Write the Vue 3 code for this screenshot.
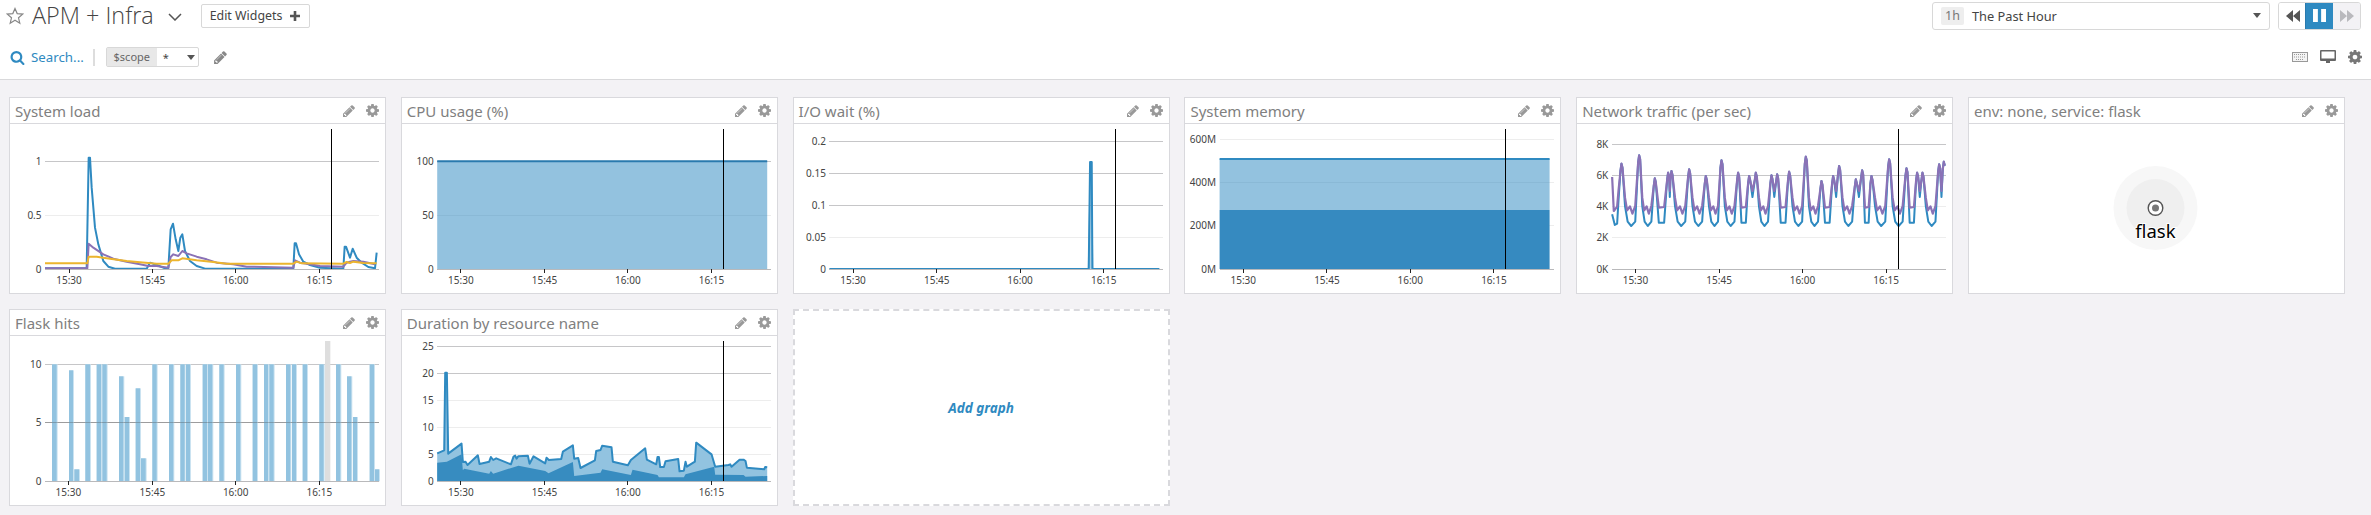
<template>
  <div class="page">
    <header class="top">
      <div class="row-title">
        <svg class="star" viewBox="0 0 18 18" width="18" height="18"><polygon points="9,1.5 11.2,6.6 16.7,7.1 12.5,10.8 13.8,16.2 9,13.3 4.2,16.2 5.5,10.8 1.3,7.1 6.8,6.6" /></svg>
        <h1 class="dash-title">APM + Infra</h1>
        <svg class="chevron" viewBox="0 0 14 8" width="14" height="8"><polyline points="1,1 7,7 13,1" /></svg>
        <button class="edit-btn">
          Edit Widgets
          <svg viewBox="0 0 10 10" width="10" height="10"><path d="M3.7 0h2.6v3.7H10v2.6H6.3V10H3.7V6.3H0V3.7h3.7z" /></svg>
        </button>
        <div class="time-box">
          <span class="time-tag">1h</span>
          <span class="time-label">The Past Hour</span>
          <span class="caret"></span>
        </div>
        <div class="playback">
          <span class="pb pb-back"><svg viewBox="0 0 14 12" width="14" height="12"><path d="M7 0v12L0 6zM14 0v12L7 6z" /></svg></span>
          <span class="pb pb-pause"><svg viewBox="0 0 12 12" width="13" height="13"><path d="M0 0h4.5v12H0zM7.5 0H12v12H7.5z" /></svg></span>
          <span class="pb pb-next"><svg viewBox="0 0 14 12" width="14" height="12"><path d="M0 0v12l7-6zM7 0v12l7-6z" /></svg></span>
        </div>
      </div>
      <div class="row-tools">
        <svg class="search-icon" viewBox="0 0 1792 1792" width="15" height="15"><path :d="SEARCH" /></svg>
        <span class="search-text">Search...</span>
        <span class="divider"></span>
        <div class="scope">
          <span class="scope-name">$scope</span>
          <span class="scope-value">*<span class="caret small"></span></span>
        </div>
        <svg class="tool-pencil" viewBox="0 0 1792 1792" width="15" height="15"><path :d="PENCIL" /></svg>
        <div class="tools-right">
          <svg viewBox="0 0 16 10" width="16" height="10" class="kbd">
            <rect x="0.5" y="0.5" width="15" height="9" />
            <path d="M2 2.5h12M2 5h12M4 7.5h8" stroke-dasharray="1 1" />
          </svg>
          <svg viewBox="0 0 16 14" width="16" height="14" class="monitor"><path d="M1 0h14a1 1 0 0 1 1 1v9a1 1 0 0 1-1 1H1a1 1 0 0 1-1-1V1a1 1 0 0 1 1-1zm.5 1.5v7h13v-7zM6 11h4v2H6z" fill-rule="evenodd" /></svg>
          <svg viewBox="128 128 1536 1536" width="14" height="14" class="gear"><path :d="GEAR" /></svg>
        </div>
      </div>
    </header>

    <main class="board">
      <section v-for="c in cards" :key="c.title" class="card">
        <div class="card-head">
          <span class="card-title">{{ c.title }}</span>
          <svg class="act" viewBox="0 0 1792 1792" width="14" height="14"><path :d="PENCIL" /></svg>
          <svg class="act" viewBox="128 128 1536 1536" width="13" height="13"><path :d="GEAR" /></svg>
        </div>

        <svg v-if="c.flask" class="plot" width="375" height="169">
          <circle cx="186.5" cy="84" r="42" fill="#f7f7f7" />
          <circle cx="186.5" cy="84" r="29" fill="#efefef" />
          <circle cx="186.5" cy="84" r="7.3" fill="#fff" stroke="#555" stroke-width="1.4" />
          <circle cx="186.5" cy="84" r="3.5" fill="#777" />
          <text class="node-label" x="186.5" y="114" text-anchor="middle">flask</text>
        </svg>

        <svg v-else class="plot" width="375" height="169">
          <line
            v-for="g in c.grids" :key="g.z"
            :x1="px(c, c.x0)" :x2="px(c, c.x1)" :y1="py(c, g.z)" :y2="py(c, g.z)"
            :stroke="g.dark ? '#c6c6c8' : '#ededed'" shape-rendering="crispEdges"
          />
          <polygon v-for="(a, i) in c.areas" :key="'a' + i" :points="pts(c, a.d)" :fill="a.fill" />
          <rect
            v-for="(b, i) in c.bars" :key="'p' + i"
            :x="px(c, b[0])" :y="py(c, b[2])" :width="(b[1] - b[0]) / 3 + 1" :height="py(c, c.axis) - py(c, b[2])"
            :fill="b[3] || '#cbe3f1'"
          />
          <rect
            v-for="(b, i) in c.bars" :key="'b' + i"
            :x="px(c, b[0])" :y="py(c, b[2])" :width="(b[1] - b[0]) / 3" :height="py(c, c.axis) - py(c, b[2])"
            :fill="b[3] || '#92c3e0'"
          />
          <line
            v-if="c.bars"
            :x1="px(c, c.x0)" :x2="px(c, c.x1)" :y1="py(c, c.grids[1].z)" :y2="py(c, c.grids[1].z)"
            stroke="rgba(60,60,60,.3)" shape-rendering="crispEdges"
          />
          <polyline
            v-for="(l, i) in c.lines" :key="'l' + i"
            :points="pts(c, l.d)" fill="none" :stroke="l.color" :stroke-width="l.w || 2" stroke-linejoin="round"
          />
          <line :x1="px(c, c.x0)" :x2="px(c, c.x1)" :y1="py(c, c.axis)" :y2="py(c, c.axis)" stroke="#b9b9bb" shape-rendering="crispEdges" />
          <g v-for="(t, i) in c.ticks" :key="'t' + i">
            <line :x1="px(c, t)" :x2="px(c, t)" :y1="py(c, c.axis)" :y2="py(c, c.axis) + 4" stroke="#222" shape-rendering="crispEdges" />
            <text class="tick" :x="px(c, t)" :y="py(c, c.axis) + 15" text-anchor="middle">{{ times[i] }}</text>
          </g>
          <text
            v-for="y in c.labels" :key="y[0]"
            class="tick" :x="px(c, c.x0) - 3.5" :y="py(c, y[1]) + 3.5" text-anchor="end"
          >{{ y[0] }}</text>
          <line
            v-if="c.cursor"
            :x1="px(c, c.cursor)" :x2="px(c, c.cursor)" y1="5" :y2="py(c, c.axis)"
            stroke="#000" shape-rendering="crispEdges"
          />
        </svg>
      </section>

      <section class="add-card">
        <span>Add graph</span>
      </section>
    </main>
  </div>
</template>

<script setup>
const GEAR = 'M1152 896q0-106-75-181t-181-75-181 75-75 181 75 181 181 75 181-75 75-181zm512-109v222q0 12-8 23t-20 13l-185 28q-19 54-39 91 35 50 107 138 10 12 10 25t-9 23q-27 37-99 108t-94 71q-12 0-26-9l-138-108q-44 23-91 38-16 136-29 186-7 28-36 28h-222q-14 0-24.5-8.5t-11.5-21.5l-28-184q-49-16-90-37l-141 107q-10 9-25 9-14 0-25-11-126-114-165-168-7-10-7-23 0-12 8-23 15-21 51-66.5t54-70.5q-27-50-41-99l-183-27q-13-2-21-12.5t-8-23.5v-222q0-12 8-23t19-13l186-28q14-46 39-92-40-57-107-138-10-12-10-24 0-10 9-23 26-36 98.5-107.5t94.5-71.5q13 0 26 10l138 107q44-23 91-38 16-136 29-186 7-28 36-28h222q14 0 24.5 8.5t11.5 21.5l28 184q49 16 90 37l142-107q9-9 24-9 13 0 25 10 129 119 165 170 7 8 7 22 0 12-8 23-15 21-51 66.5t-54 70.5q26 50 41 98l183 28q13 2 21 12.5t8 23.5z'
const PENCIL = 'M491 1536l91-91-235-235-91 91v107h128v128h107zm523-928q0-22-22-22-10 0-17 7l-542 542q-7 7-7 17 0 22 22 22 10 0 17-7l542-542q7-7 7-17zm-54-192l416 416-832 832h-416v-416zm683 96q0 53-37 90l-166 166-416-416 166-165q36-38 90-38 53 0 91 38l235 234q37 39 37 91z'
const SEARCH = 'M1216 832q0-185-131.5-316.5t-316.5-131.5-316.5 131.5-131.5 316.5 131.5 316.5 316.5 131.5 316.5-131.5 131.5-316.5zm512 832q0 52-38 90t-90 38q-54 0-90-38l-343-342q-179 124-399 124-143 0-273.5-55.5t-225-150-150-225-55.5-273.5 55.5-273.5 150-225 225-150 273.5-55.5 273.5 55.5 225 150 150 225 55.5 273.5q0 220-124 399l343 343q37 37 37 90z'

const BLUE = '#2f8ac1'
const PURPLE = '#8a72b6'
const YELLOW = '#ecb52e'
const LIGHT = '#92c3e0'
const DARK = '#378cc0'

const times = ['15:30', '15:45', '16:00', '16:15']

// series are written in 3x crop coordinates, px/py bring them back to the plot
const px = (c, z) => (z - c.ox) / 3
const py = (c, z) => (z - c.oy) / 3
const pts = (c, d) => d.map(p => `${px(c, p[0]).toFixed(2)},${py(c, p[1]).toFixed(2)}`).join(' ')
const parse = s => s.trim().split(/\s+/).map(p => p.split(',').map(Number))

// network peaks: the two lines share their tops and only differ in the valleys
const peaks = parse(`185,218 238,193 285,262 325,245 335,240 388,235 438,255 485,208 535,245 568,255 588,245 635,253 652,250 688,242 738,197 785,270 820,255 838,225 888,265 907,238 935,255 988,205 1040,232 1072,245 1088,245 1138,220 1152,212`)

function trafficLine(start, shape) {
  const out = [...start]
  peaks.forEach(([x, y], i) => {
    out.push([x - 3, y + 22], [x, y], [x + 3, y + 12])
    const next = peaks[i + 1]
    if (!next) return
    const gap = next[0] - x
    if (gap < 25) out.push([x + gap / 2, shape.dip])
    else {
      const stops = gap < 45 ? shape.short : shape.valley
      stops.forEach(([t, v]) => out.push([x + gap * t, v]))
    }
  })
  return out
}

const blueTraffic = trafficLine([[157, 370], [165, 402], [172, 398], [176, 330]], {
  dip: 318,
  short: [[0.3, 395], [0.7, 395]],
  valley: [[0.2, 345], [0.35, 392], [0.55, 405], [0.78, 392]],
})
const purpleTraffic = trafficLine([[157, 258], [162, 360], [172, 347], [176, 300]], {
  dip: 300,
  short: [[0.3, 350], [0.7, 348]],
  valley: [[0.2, 320], [0.32, 358], [0.48, 346], [0.62, 368], [0.78, 345]],
})

const hitBars = [
  [156, 170, 190], [207, 219, 208], [223, 237, 505], [256, 270, 190], [290, 303, 190], [307, 320, 190],
  [357, 370, 226], [374, 387, 348], [407, 420, 262], [423, 437, 472], [457, 470, 190], [507, 520, 190],
  [541, 554, 190], [558, 570, 190], [608, 621, 190], [624, 637, 190], [658, 671, 190], [708, 721, 190],
  [758, 771, 190], [792, 804, 190], [808, 821, 190], [858, 871, 190], [876, 888, 190], [908, 921, 190],
  [958, 971, 190], [975, 988, 120, '#dedede'], [1008, 1021, 190], [1041, 1054, 226], [1059, 1071, 348],
  [1109, 1122, 190], [1125, 1137, 505],
]

const durationTop = parse(`141,457 162,448 165,215 170,215 174,458 214,428 218,483 226,482 232,492 263,463 268,489 297,482 302,468 309,477 318,472 362,490 370,467 375,464 379,473 384,466 413,464 418,488 430,466 465,487 469,470 476,477 513,474 518,452 548,433 552,473 564,471 571,501 614,478 618,450 631,447 636,434 664,439 668,482 713,493 722,477 765,442 770,476 798,490 802,468 806,468 810,498 821,498 826,481 864,474 868,511 881,509 886,482 890,497 914,482 918,425 964,460 975,497 1015,492 1020,490 1024,497 1048,476 1060,476 1066,480 1070,500 1122,505 1125,498 1131,499`)
const durationLow = parse(`141,485 170,482 214,460 218,508 222,503 297,518 302,510 309,518 385,494 465,510 475,517 548,483 552,525 631,515 636,505 722,522 727,506 802,522 806,529 881,529 886,520 972,497 975,521 1060,522 1066,527 1131,525`)

const closeArea = (line, base) => [[line[0][0], base], ...line, [line[line.length - 1][0], base]]

const cards = [
  {
    title: 'System load', ox: 30, oy: 99, x0: 135, x1: 1137, axis: 535, cursor: 994,
    ticks: [207, 457, 707, 958],
    grids: [{ z: 211, dark: true }, { z: 373 }],
    labels: [['1', 211], ['0.5', 373], ['0', 535]],
    lines: [
      { color: BLUE, d: parse(`135,532 260,532 266,200 270,200 275,290 285,410 295,460 310,510 325,527 345,533 440,533 450,515 470,522 495,532 505,532 512,415 519,398 527,445 535,480 541,440 547,430 555,480 570,510 590,525 615,533 880,533 884,457 888,457 897,490 910,512 930,522 960,530 1030,533 1034,467 1038,467 1050,500 1058,473 1070,500 1085,515 1105,528 1125,532 1130,485`) },
      { color: PURPLE, d: parse(`135,532 262,532 266,458 280,470 310,490 340,503 380,512 420,520 445,525 470,525 505,530 512,498 520,490 535,495 547,480 560,487 590,497 620,505 650,515 700,520 740,527 880,530 885,508 900,515 930,520 960,525 1030,527 1040,515 1050,512 1060,510 1090,512 1125,520`) },
      { color: YELLOW, d: parse(`135,517 262,517 266,497 290,497 330,503 380,510 420,514 470,518 505,518 515,508 535,508 547,502 590,508 640,513 680,518 880,518 890,512 905,517 1030,518 1040,513 1050,516 1060,512 1090,516 1130,517`) },
    ],
  },
  {
    title: 'CPU usage (%)', ox: 35.4, oy: 99, x0: 141, x1: 1143, axis: 535, cursor: 1000,
    ticks: [212, 463, 713, 964],
    grids: [{ z: 211, dark: true }, { z: 373 }],
    labels: [['100', 211], ['50', 373], ['0', 535]],
    areas: [{ fill: 'rgba(47,138,193,.52)', d: [[141, 211], [1131, 211], [1131, 534], [141, 534]] }],
    lines: [{ color: '#2a7aae', d: [[141, 211], [1131, 211]] }],
  },
  {
    title: 'I/O wait (%)', ox: 40.8, oy: 99, x0: 147, x1: 1149, axis: 535, cursor: 1006,
    ticks: [218, 469, 719, 970],
    grids: [{ z: 151, dark: true }, { z: 247, dark: true }, { z: 343, dark: true }, { z: 439 }],
    labels: [['0.2', 151], ['0.15', 247], ['0.1', 343], ['0.05', 439], ['0', 535]],
    areas: [{ fill: 'rgba(47,138,193,.4)', d: [[922, 534], [929, 213], [934, 213], [939, 534]] }],
    lines: [{ color: BLUE, d: [[147, 534], [925, 534], [929, 213], [934, 213], [936, 534], [1137, 534]] }],
  },
  {
    title: 'System memory', ox: 46.2, oy: 99, x0: 150, x1: 1152, axis: 535, cursor: 1009,
    ticks: [221, 472, 722, 973],
    grids: [{ z: 145 }, { z: 274 }, { z: 403 }],
    labels: [['600M', 145], ['400M', 274], ['200M', 403], ['0M', 535]],
    areas: [
      { fill: 'rgba(47,138,193,.52)', d: [[150, 204], [1140, 204], [1140, 357], [150, 357]] },
      { fill: 'rgba(47,134,190,.97)', d: [[150, 357], [1140, 357], [1140, 534], [150, 534]] },
    ],
    lines: [{ color: BLUE, w: 2, d: [[150, 204], [1140, 204]] }],
  },
  {
    title: 'Network traffic (per sec)', ox: 51.6, oy: 99, x0: 156, x1: 1158, axis: 535, cursor: 1015,
    ticks: [227, 478, 728, 979],
    grids: [{ z: 160, dark: true }, { z: 253, dark: true }, { z: 346 }, { z: 439 }],
    labels: [['8K', 160], ['6K', 253], ['4K', 346], ['2K', 439], ['0K', 535]],
    lines: [
      { color: BLUE, d: blueTraffic },
      { color: PURPLE, w: 2.2, d: purpleTraffic },
    ],
  },
  { title: 'env: none, service: flask', flask: true },
  {
    title: 'Flask hits', ox: 30, oy: 105, x0: 135, x1: 1137, axis: 541,
    ticks: [205, 457, 707, 958],
    grids: [{ z: 190, dark: true }, { z: 365, dark: true }],
    labels: [['10', 190], ['5', 365], ['0', 541]],
    bars: hitBars,
  },
  {
    title: 'Duration by resource name', ox: 35.4, oy: 105, x0: 141, x1: 1143, axis: 541, cursor: 1000,
    ticks: [212, 463, 713, 964],
    grids: [{ z: 136, dark: true }, { z: 217, dark: true }, { z: 298 }, { z: 379 }, { z: 460 }],
    labels: [['25', 136], ['20', 217], ['15', 298], ['10', 379], ['5', 460], ['0', 541]],
    areas: [
      { fill: LIGHT, d: closeArea(durationTop, 540) },
      { fill: DARK, d: closeArea(durationLow, 540) },
    ],
    lines: [{ color: BLUE, d: durationTop }],
  },
]
</script>

<style>
html, body { margin: 0; background: #f3f2f5; }
</style>

<style scoped>
.page {
  font-family: "Noto Sans", "Open Sans", sans-serif;
  min-height: 515px;
  background: #f3f2f5;
}

.top {
  background: #fff;
  border-bottom: 1px solid #d9d9db;
  height: 79px;
}

.row-title {
  display: flex;
  align-items: center;
  height: 31px;
  padding: 0 10px 0 6px;
}

.star { fill: none; stroke: #888; stroke-width: 1.2; margin-right: 8px; }

.dash-title {
  margin: 0;
  font-family: "Open Sans", "Noto Sans", sans-serif;
  font-size: 23.4px;
  font-weight: 300;
  color: #444;
  line-height: 31px;
}

.chevron { fill: none; stroke: #555; stroke-width: 1.5; margin: 2px 19px 0 14px; }

.edit-btn {
  display: flex;
  align-items: center;
  gap: 8px;
  height: 24px;
  padding: 0 9px 0 8px;
  background: #fff;
  border: 1px solid #d8d8d8;
  border-radius: 2px;
  font-family: inherit;
  font-size: 12.4px;
  color: #444;
}
.edit-btn svg { fill: #555; }

.time-box {
  display: flex;
  align-items: center;
  margin-left: auto;
  width: 338px;
  height: 28px;
  box-sizing: border-box;
  padding: 0 8px;
  border: 1px solid #d8d8d8;
  border-radius: 3px;
}
.time-tag {
  padding: 0 4px;
  background: #eee;
  border-radius: 2px;
  color: #777;
  font-size: 12.5px;
  line-height: 18px;
}
.time-label { margin-left: 8px; font-size: 12.8px; color: #444; }

.caret {
  margin-left: auto;
  width: 0;
  height: 0;
  border: 4px solid transparent;
  border-top: 5px solid #555;
  border-bottom: 0;
}
.caret.small { margin-left: 18px; }

.playback {
  display: flex;
  margin-left: 8px;
  height: 28px;
  box-sizing: border-box;
  border: 1px solid #d8d8d8;
  border-radius: 3px;
  overflow: hidden;
}
.pb { display: flex; align-items: center; justify-content: center; width: 27px; }
.pb-back { fill: #555; background: #fff; }
.pb-pause { fill: #fff; background: #2f8ac1; box-shadow: 0 0 0 1px #2a7aae; }
.pb-next { fill: #b9b9bd; background: #f3f2f5; }

.row-tools {
  display: flex;
  align-items: center;
  height: 40px;
  margin-top: 6px;
  padding: 0 9px 0 10px;
}

.search-icon { fill: #2f8ac1; }
.search-text { margin-left: 6px; font-size: 13.3px; color: #2f8ac1; }
.divider { width: 2px; height: 17px; margin: 0 11px 0 9px; background: #ddd; }

.scope {
  display: flex;
  align-items: center;
  height: 20px;
  box-sizing: border-box;
  border: 1px solid #d8d8d8;
  border-radius: 2px;
  font-size: 11px;
  color: #666;
}
.scope-name {
  width: 50px;
  text-align: center;
  background: #e8e8e8;
  line-height: 18px;
}
.scope-value {
  display: flex;
  align-items: center;
  width: 41px;
  padding-left: 6px;
  box-sizing: border-box;
  color: #444;
}

.tool-pencil { fill: #888; margin-left: 14px; }

.tools-right { display: flex; align-items: center; gap: 12px; margin-left: auto; }
.kbd { fill: #f4f4f4; stroke: #999; stroke-width: 1; }
.monitor { fill: #666; }
.gear { fill: #777; }

.board {
  display: grid;
  grid-template-columns: repeat(6, 1fr);
  grid-auto-rows: 197px;
  gap: 15px 14.8px;
  width: 2336px;
  padding: 17px 0 0 9px;
}

.card {
  box-sizing: border-box;
  background: #fff;
  border: 1px solid #d9d9dd;
}

.card-head {
  display: flex;
  align-items: center;
  gap: 10px;
  height: 25px;
  padding: 0 6px 0 5px;
  border-bottom: 1px solid #d9d9dd;
}
.card-title { margin-right: auto; font-size: 15px; color: #808080; }
.act { fill: #999; }

.plot { display: block; }

.tick { font-size: 10px; fill: #444; }

.node-label {
  font-size: 18.5px;
  fill: #000;
  stroke: #fff;
  stroke-width: 2px;
  paint-order: stroke;
}

.add-card {
  display: flex;
  align-items: center;
  justify-content: center;
  box-sizing: border-box;
  background: #fff;
  border: 2px dashed #d9d9dd;
  font-size: 13.5px;
  font-weight: 700;
  font-style: italic;
  color: #2f8ac1;
}
</style>
